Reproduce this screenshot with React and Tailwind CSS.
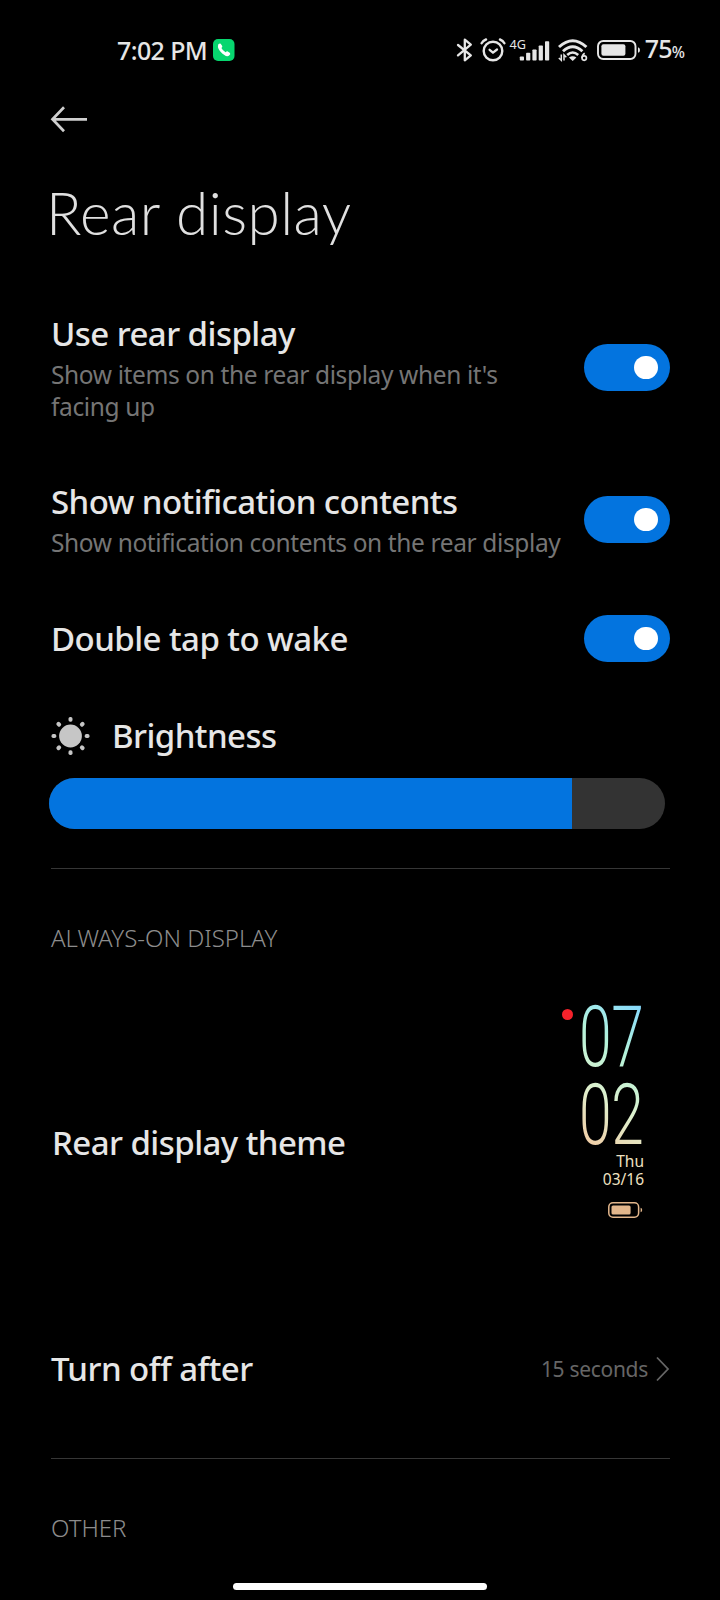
function Bluetooth() {
  return (
    <svg width="17" height="24" viewBox="0 0 17 24" fill="none" stroke="#e6e6e6" strokeWidth="2.3" strokeLinejoin="round" strokeLinecap="round">
      <path d="M2 7 14.8 17.4 8.8 22.3V1.7l6 5L2 17.4" />
    </svg>
  );
}

function Alarm() {
  return (
    <svg width="26" height="24" viewBox="0 0 26 24" fill="none" stroke="#e6e6e6" strokeLinecap="round" strokeLinejoin="round">
      <circle cx="13" cy="13" r="9.3" strokeWidth="2.4" />
      <path d="m9.6 11.8 3.4 2.9 4-3.2" strokeWidth="2.3" />
      <path d="M1.6 5.2Q3 2.6 6 1.5M24.4 5.2Q23 2.6 20 1.5" strokeWidth="2.4" />
    </svg>
  );
}

function Signal() {
  return (
    <svg width="41" height="24" viewBox="0 0 41 24" fill="#e6e6e6" overflow="visible">
      <text x="0.5" y="10.6" fontSize="12.5" fontFamily="Noto Sans, sans-serif" textLength="16.5" lengthAdjust="spacingAndGlyphs">4G</text>
      <rect x="10.8" y="18.5" width="4.2" height="4" rx="0.8" />
      <rect x="17.1" y="14.8" width="4.2" height="7.7" rx="0.8" />
      <rect x="23.4" y="11.5" width="4.2" height="11" rx="0.8" />
      <rect x="29.7" y="7.5" width="4.2" height="15" rx="0.8" />
      <rect x="36" y="3.2" width="4.2" height="19.3" rx="0.8" />
    </svg>
  );
}

function Wifi() {
  return (
    <svg width="30" height="24" viewBox="0 0 30 24" fill="none" stroke="#e6e6e6">
      <path d="M1 9Q14.7-3.6 28.4 9" strokeWidth="3" />
      <path d="M5 13.2Q14.7 4.4 24.4 13.2" strokeWidth="2.9" />
      <path d="M9.2 17Q14.7 12 20.2 17" strokeWidth="2.6" />
      <path d="m11 19.6q3.7-2.8 7.4 0L14.7 23Z" fill="#e6e6e6" stroke="none" />
      <path d="M3.3 16.5v5.8L.8 20M6 22.6v-5.8l2.3 2.4" strokeWidth="1.5" />
      <circle cx="26.2" cy="20.1" r="2.2" strokeWidth="1.7" />
      <path d="M24 20q.2-3.5 2.7-4.8" strokeWidth="1.7" />
    </svg>
  );
}

function Battery({ width, height }) {
  return (
    <svg width={width} height={height} viewBox="0 0 44 20" fill="currentColor">
      <rect x="1" y="1" width="37.5" height="18" rx="5.2" fill="none" stroke="currentColor" strokeWidth="1.9" />
      <rect x="4.4" y="4.2" width="24" height="11.6" rx="2" />
      <path d="M41 7.2q2 .4 2 2.8t-2 2.8Z" />
    </svg>
  );
}

function Switch() {
  return (
    <span className="flex h-[47px] w-[86px] shrink-0 items-center justify-end rounded-full bg-[#0374df] pr-[12.5px]">
      <span className="size-[23.5px] rounded-full bg-white" />
    </span>
  );
}

function Label({ children }) {
  return <div className="text-[33px] leading-[40px] font-medium tracking-[-0.55px] whitespace-nowrap text-[#e6e6e6]">{children}</div>;
}

function Setting({ title, children }) {
  return (
    <div className="flex items-center justify-between">
      <div className="pt-[1px]">
        <Label>{title}</Label>
        {children && <p className="mt-[5px] -mb-[1px] text-[24.5px] leading-8 tracking-[-0.38px] whitespace-nowrap text-[#757575]">{children}</p>}
      </div>
      <Switch />
    </div>
  );
}

function Heading({ children }) {
  return <h2 className="text-[24px] leading-8 font-light whitespace-nowrap text-[#8c8c8c]">{children}</h2>;
}

const rays = [0, 45, 90, 135, 180, 225, 270, 315];

export default function App() {
  return (
    <div className="flex h-[1600px] w-[720px] flex-col overflow-hidden bg-black font-['Noto_Sans',sans-serif]">
      <div className="flex h-[99px] shrink-0 items-center justify-between pr-[35px] pl-[117px] text-[#e6e6e6]">
        <div className="flex items-center gap-[6px]">
          <span className="text-[25px] leading-8 font-medium tracking-[-0.6px]">7:02 PM</span>
          <svg width="22" height="22" viewBox="0 0 22 22">
            <rect width="21.5" height="22" rx="5" fill="#07d66f" />
            <path d="M5.2 5.5q1.5-1.6 2.5-.8l1.5 2.2q.5.9-.8 2.2 1.4 2.8 4.2 4.2 1.3-1.3 2.2-.8l2.2 1.5q.9 1-.9 2.6-2.3 1.8-6.9-2.1-5.3-4.8-4-9Z" fill="#fff" />
          </svg>
        </div>
        <div className="flex items-center">
          <Bluetooth />
          <span className="ml-[7px]"><Alarm /></span>
          <span className="ml-[3px]"><Signal /></span>
          <span className="ml-2"><Wifi /></span>
          <span className="ml-[9px]"><Battery width={44} height={20} /></span>
          <span className="ml-[4px] flex items-baseline leading-8 font-medium">
            <span className="text-[25px] tracking-[-0.8px]">75</span>
            <span className="text-[15.5px]">%</span>
          </span>
        </div>
      </div>

      <div className="flex h-10 items-center pl-[50px]">
        <svg width="38" height="28" viewBox="0 0 38 28" fill="none" stroke="#cfcfcf" strokeWidth="2.7">
          <path d="M14 2.3 2.5 14.3l11.5 12M2.5 14.3H37" />
        </svg>
      </div>

      <h1 className="mt-[33px] pl-[46px] font-['Lato',sans-serif] text-[58.5px] leading-[80px] font-light tracking-[0.45px] whitespace-nowrap text-[#e0e0e0]">Rear display</h1>

      <div className="mt-[61px] flex flex-col pr-[50px] pl-[51px]">
        <Setting title="Use rear display">
          Show items on the rear display when it's
          <br />
          facing up
        </Setting>
        <div className="mt-[59px]">
          <Setting title="Show notification contents">Show notification contents on the rear display</Setting>
        </div>
        <div className="mt-[57px]">
          <Setting title="Double tap to wake" />
        </div>

        <div className="mt-[54px] flex items-center gap-[21px]">
          <svg width="40" height="40" viewBox="-20 -20 40 40" fill="#c6c6c6">
            <circle cx="-0.5" r="11.4" />
            {rays.map((a) => (
              <rect key={a} x="-2" y="-19" width="4" height="4.8" rx="1.7" transform={`translate(-0.5 0) rotate(${a})`} />
            ))}
          </svg>
          <Label>Brightness</Label>
        </div>
        <div className="mt-[22px] ml-[-2.5px] h-[51px] w-[616px] overflow-hidden rounded-full bg-[#333]">
          <div className="h-full w-[523.5px] bg-[#0374df]" />
        </div>
        <div className="mt-[39px] h-px bg-[#363636]" />

        <div className="mt-[53px]"><Heading>ALWAYS-ON DISPLAY</Heading></div>
        <div className="mt-[18px] flex h-[340px] items-center justify-between pr-[26px] pl-[1px]">
          <div className="pt-[2px]"><Label>Rear display theme</Label></div>
          <div className="flex h-full items-start gap-[9px] pt-[26px]">
            <span className="mt-[11px] size-[11px] rounded-full bg-[#f5222b]" />
            <div className="flex w-[62px] flex-col items-end">
              <div className="mr-[-31px] h-[154px] w-[96px] origin-left scale-x-[0.69] bg-linear-[205deg,#86daff_5%,#b4f3da_35%,#dff0cd_65%,#f2cba4_95%] bg-clip-text font-['Roboto',sans-serif] text-[85px] leading-[78px] font-light tracking-[-0.5px] text-transparent">
                07
                <br />
                02
              </div>
              <div className="text-right text-[15.5px] leading-[18px] text-[#eee0c0]">
                Thu
                <br />
                03/16
              </div>
              <div className="mt-[14px] mr-[1px] text-[#e2b68b]"><Battery width={35} height={16} /></div>
            </div>
          </div>
        </div>

        <div className="mt-[37px] flex items-center justify-between">
          <Label>Turn off after</Label>
          <div className="flex items-center gap-[8px] text-[21px] leading-7 tracking-[-0.3px] text-[#666]">
            15 seconds
            <svg width="14" height="26" viewBox="0 0 14 26" fill="none" stroke="#666" strokeWidth="1.8">
              <path d="m1 1.5 11 11.5L1 24.5" />
            </svg>
          </div>
        </div>
        <div className="mt-[69px] h-px bg-[#363636]" />
        <div className="mt-[53px]"><Heading>OTHER</Heading></div>
      </div>
      <div className="mt-[39px] h-[7px] w-[254px] self-center rounded-full bg-white" />
    </div>
  );
}
